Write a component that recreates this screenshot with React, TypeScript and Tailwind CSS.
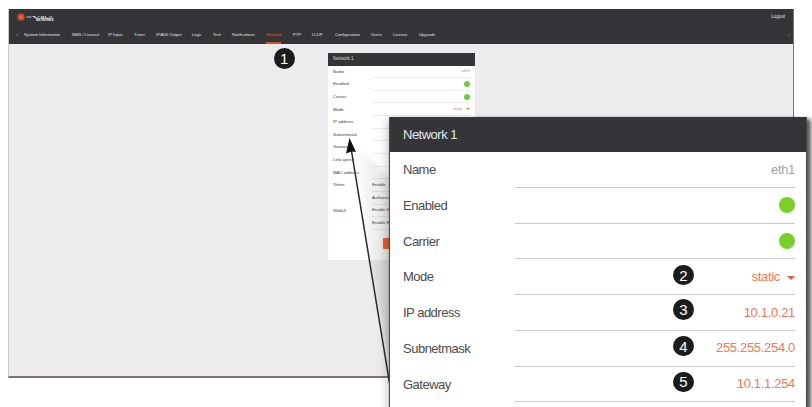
import { ChevronLeft, ChevronRight } from "lucide-react";

const tabs = [
  { label: "System Information", width: "w-[48px]" },
  { label: "NMS / License", width: "w-[36px]" },
  { label: "IP Input", width: "w-[26px]" },
  { label: "Tuner", width: "w-[22px]" },
  { label: "IP/ASI Output", width: "w-[36px]" },
  { label: "Logs", width: "w-[21px]" },
  { label: "Text", width: "w-[19px]" },
  { label: "Notifications", width: "w-[34px]" },
  { label: "Network", width: "w-[27px]", active: true },
  { label: "PTP", width: "w-[19px]" },
  { label: "LLDP", width: "w-[23px]" },
  { label: "Configuration", width: "w-[36px]" },
  { label: "Users", width: "w-[22px]" },
  { label: "License", width: "w-[26px]" },
  { label: "Upgrade", width: "w-[24px]" },
];

const smallRows = [
  { label: "Name", value: "eth1", kind: "text" },
  { label: "Enabled", kind: "dot" },
  { label: "Carrier", kind: "dot" },
  { label: "Mode", value: "static", kind: "select" },
  { label: "IP address" },
  { label: "Subnetmask" },
  { label: "Gateway" },
  { label: "Link speed" },
  { label: "MAC address" },
  { label: "Telnet", note: "Enable" },
  { label: "", note: "Authorise" },
  { label: "WebUI", note: "Enable HTTP" },
  { label: "", note: "Enable HTTPS" },
];

const detailRows = [
  { label: "Name", value: "eth1", kind: "text" },
  { label: "Enabled", kind: "dot" },
  { label: "Carrier", kind: "dot" },
  { label: "Mode", value: "static", kind: "select", step: 2, shift: "-mt-[3px]" },
  { label: "IP address", value: "10.1.0.21", step: 3, shift: "-mt-[6px]" },
  { label: "Subnetmask", value: "255.255.254.0", step: 4, shift: "-mt-[4px]" },
  { label: "Gateway", value: "10.1.1.254", step: 5, shift: "-mt-[4px]" },
];

function Step({ n, className = "" }: { n: number; className?: string }) {
  return (
    <span
      className={`flex h-[20.5px] w-[20.5px] items-center justify-center rounded-full bg-[#1d1c1d] text-[15px] leading-none text-white ${className}`}
    >
      {n}
    </span>
  );
}

function Logo() {
  return (
    <div className="flex items-start gap-[1px]">
      <svg viewBox="0 0 8 8" className="h-[8px] w-[8px]">
        <circle cx="4" cy="4" r="3.7" fill="#c94a24" />
        <path d="M2.2 3.2h3.6M2.2 4.8h3.6" stroke="#ef8b62" strokeWidth=".7" />
      </svg>
      <div className="pt-[1.5px] text-white">
        <svg viewBox="0 0 27 4" className="h-[4px] w-[27px]">
          <path
            d="M.5 2h5M6.5 1.5h3M8 2.5l3 .5M11.5 3l2-2M14.5 1.8h4M15 3l3-.5M19.5 1.2v2h2.5M23 2h3.5"
            fill="none"
            stroke="#d7d7d8"
            strokeWidth=".9"
          />
        </svg>
        <p className="pl-[10px] text-[3px] leading-[2px] font-bold">NETWORKS</p>
      </div>
    </div>
  );
}

function SmallPanel() {
  return (
    <section className="ml-[319px] mt-[9.5px] h-[207px] w-[147px] bg-white text-[4.3px] text-[#3c3c3e]">
      <h2 className="flex h-[12.5px] items-center bg-[#353539] pl-[5px] text-[4.6px] text-[#d5d5d6]">
        Network 1
      </h2>
      {smallRows.map((row, i) => (
        <div key={i} className="flex h-[12.65px] items-center pr-[5px] pl-[5px]">
          <span className="w-[39px] shrink-0">{row.label}</span>
          <div className="flex h-full flex-1 items-center border-b border-[#ececec]">
            {row.note && <span className="whitespace-nowrap">{row.note}</span>}
            <span className="ml-auto">
              {row.kind === "dot" && (
                <span className="block h-[6px] w-[6px] rounded-full bg-[#70cb35]" />
              )}
              {row.kind === "text" && <span className="text-[#999]">{row.value}</span>}
              {row.kind === "select" && (
                <span className="flex items-center gap-[3px] text-[#f0784f]">
                  {row.value}
                  <svg viewBox="0 0 4 2" className="h-[2px] w-[4px]">
                    <path d="M0 0h4L2 2z" fill="currentColor" />
                  </svg>
                </span>
              )}
            </span>
          </div>
        </div>
      ))}
      <div className="mt-[8px] ml-[55px] h-[11px] w-[38px] rounded-[1px] bg-[#f66a32]" />
    </section>
  );
}

function DetailPanel() {
  return (
    <section className="absolute top-[117px] left-[389px] h-[310px] w-[418px] border-x border-[#4a4a4d] bg-white text-[13px] tracking-[-0.32px] text-[#4b4b4d] shadow-[3px_3px_4px_1px_rgba(0,0,0,0.65),-4px_4px_8px_rgba(0,0,0,0.14)]">
      <h2 className="flex h-[35px] items-center bg-[#353539] pl-[13px] tracking-[-0.5px] text-[#e8e8e9]">
        Network 1
      </h2>
      {detailRows.map((row) => (
        <div key={row.label} className="flex h-[35.75px] items-center pr-[11px] pl-[13px]">
          <span className="w-[112px] shrink-0 tracking-[-0.5px]">{row.label}</span>
          <div className="flex h-full flex-1 items-center justify-end border-b border-[#cacaca]">
            {row.step && <Step n={row.step} className={`mr-auto ml-[158px] ${row.shift}`} />}
            {row.kind === "dot" && (
              <span className="h-[16px] w-[16px] rounded-full bg-[#78d02b]" />
            )}
            {row.kind === "text" && <span className="text-[#a2a2a4]">{row.value}</span>}
            {row.kind === "select" && (
              <span className="flex items-center gap-[7px] text-[#f0785a]">
                {row.value}
                <svg viewBox="0 0 8 4" className="mt-[3px] h-[4px] w-[8px]">
                  <path d="M0 0h8L4 4z" fill="#ee5a35" />
                </svg>
              </span>
            )}
            {!row.kind && <span className="text-[#f0785a]">{row.value}</span>}
          </div>
        </div>
      ))}
    </section>
  );
}

export default function App() {
  return (
    <div className="relative h-[407px] w-[812px] overflow-hidden bg-white pt-[9px] pl-[8px] font-['Liberation_Sans',Arial,sans-serif]">
      <div className="h-[369px] w-[786px] border-r border-b-2 border-l border-[#77777a] border-l-[#c9c9cb] bg-[#edebee]">
        <header className="h-[34.5px] bg-[#353539] text-[4.2px] text-[#e2e2e4]">
          <div className="flex h-[17px] items-start justify-between pt-[4px] pr-[8px] pl-[8px]">
            <Logo />
            <span className="mt-[1px] text-[4.5px]">Logout</span>
          </div>
          <nav className="flex h-[17.5px] items-center pr-[2px] pl-[6px]">
            <ChevronLeft className="h-[4px] w-[4px]" />
            <div className="ml-[5px] flex h-full">
              {tabs.map((tab) => (
                <div key={tab.label} className={`h-full shrink-0 ${tab.width}`}>
                  <span
                    className={`inline-flex h-full items-center whitespace-nowrap ${
                      tab.active ? "border-b-2 border-[#d9512b] pt-[2px] text-[#e0562f]" : ""
                    }`}
                  >
                    {tab.label}
                  </span>
                </div>
              ))}
            </div>
            <ChevronRight className="ml-auto h-[4px] w-[4px]" />
          </nav>
        </header>
        <SmallPanel />
      </div>

      <Step n={1} className="absolute top-[48px] left-[274px]" />

      {/* pointer from the small panel to the enlarged one */}
      <svg viewBox="0 0 812 407" className="absolute inset-0 h-full w-full">
        <defs>
          <linearGradient id="shade" x1="0" x2="1">
            <stop offset="0" stopColor="#000" stopOpacity="0" />
            <stop offset="1" stopColor="#000" stopOpacity=".12" />
          </linearGradient>
          <filter id="soft">
            <feGaussianBlur stdDeviation="2.5" />
          </filter>
        </defs>
        <path d="M354 142L392 180V378L370 260z" fill="url(#shade)" filter="url(#soft)" />
        <path d="M351 148L390 386" stroke="#2b2b2b" strokeWidth="1.5" />
        <path d="M349.5 138L346 153.500L351.500 151.500L356 152z" fill="#111" />
      </svg>

      <DetailPanel />
    </div>
  );
}
